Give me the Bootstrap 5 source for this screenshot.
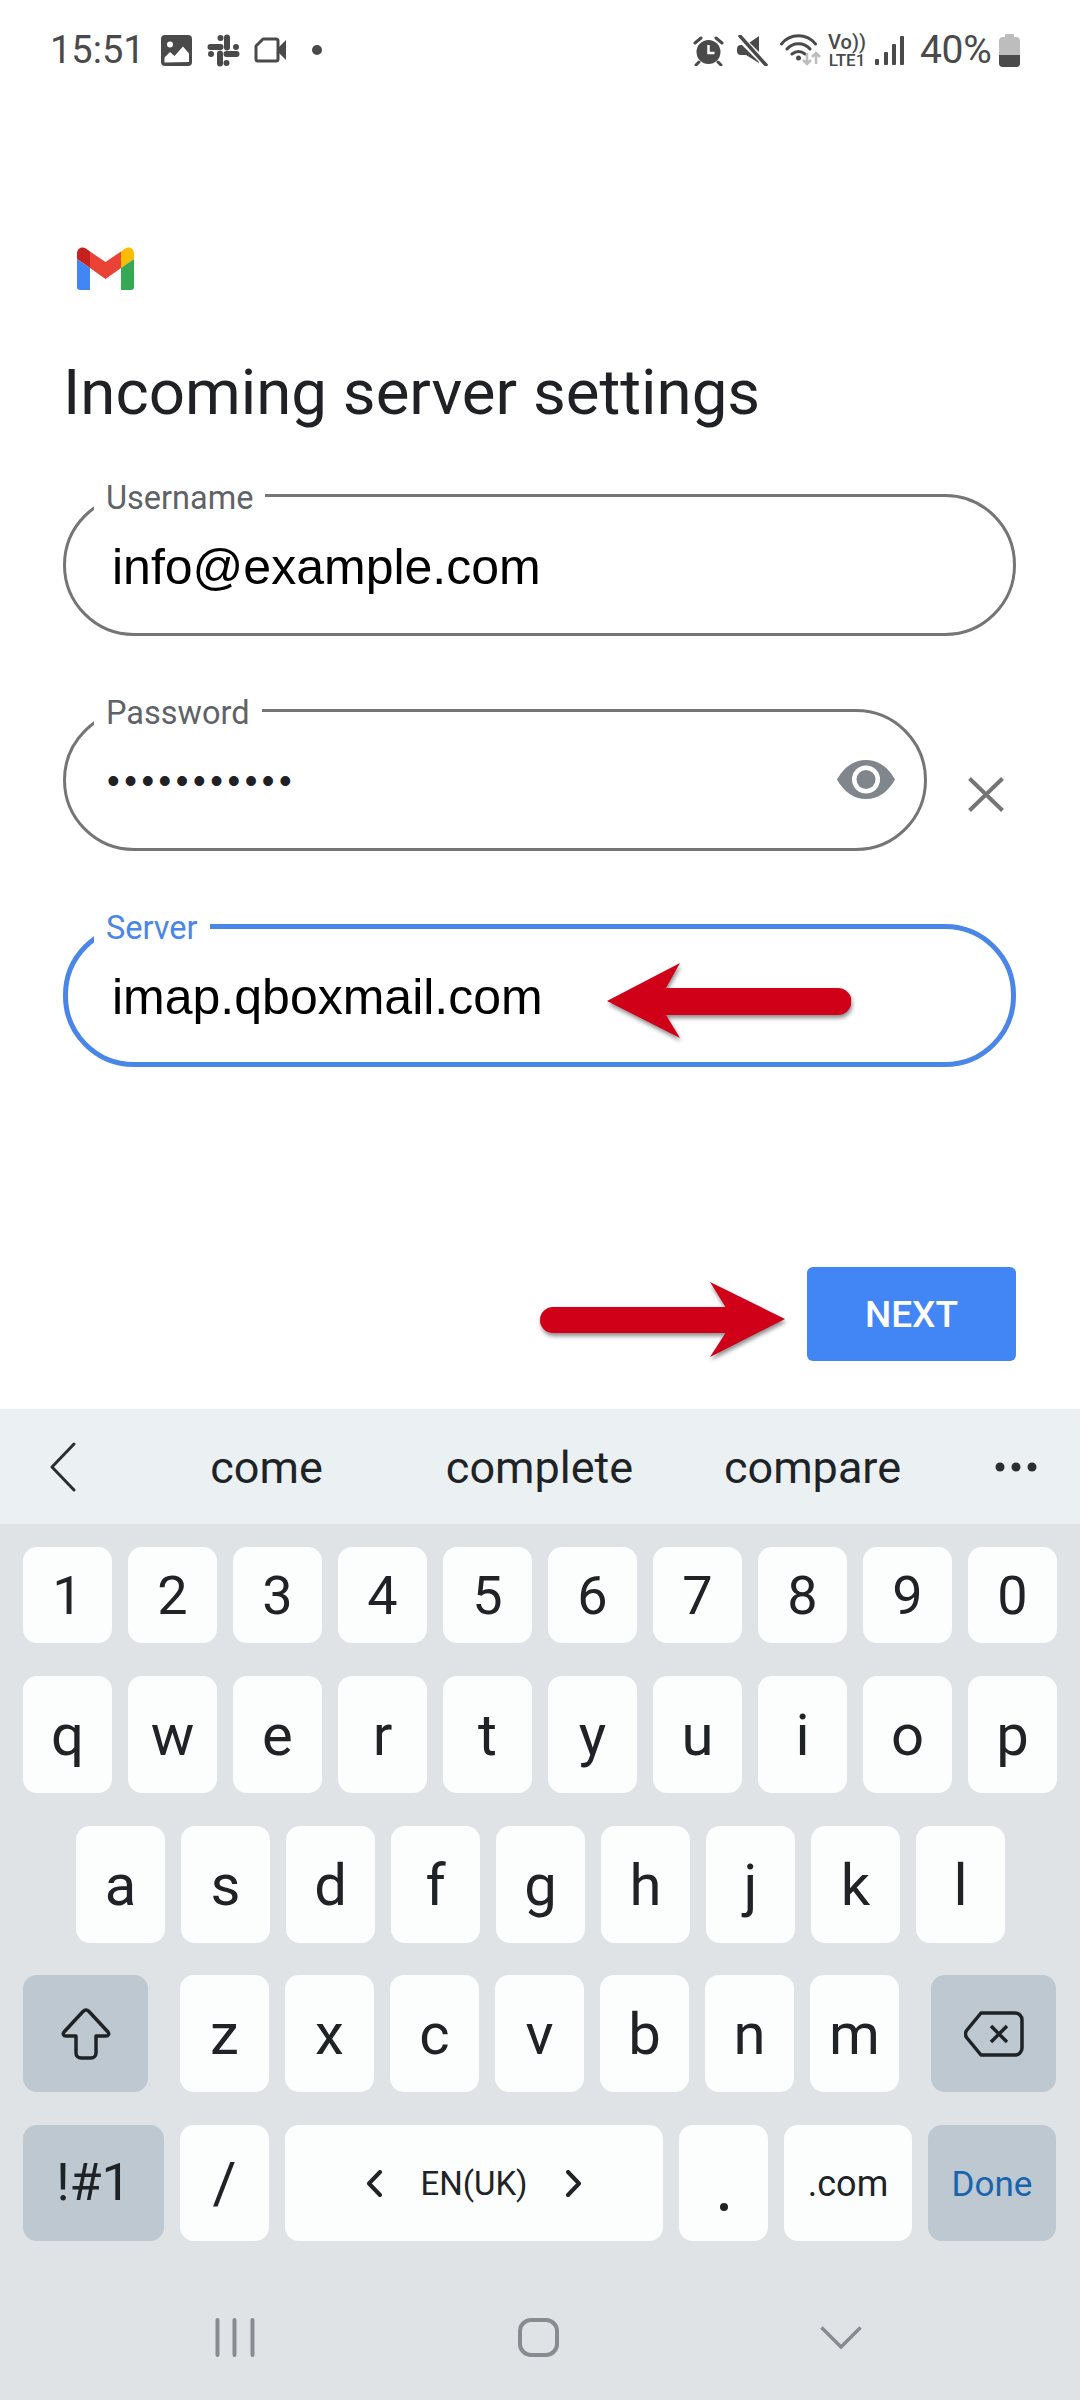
<!DOCTYPE html>
<html lang="en">
<head>
<meta charset="utf-8">
<title>Incoming server settings</title>
<link href="https://cdn.jsdelivr.net/npm/bootstrap@5.3.0/dist/css/bootstrap.min.css" rel="stylesheet">
<style>
html,body{margin:0;background:#fff}
body{width:1080px;height:2400px;overflow:hidden;font-family:Roboto,sans-serif}
.phone{width:1080px;height:2400px}
.statusbar{height:100px;padding:0 60px 0 50px;color:#4a4a4a;fill:#4a4a4a}
.stime{font-size:38px;line-height:1;width:95px}
.spct{font-size:39px;line-height:1;margin-left:16px;width:76px;letter-spacing:-.3px}
.volte{font:500 17px/17px Roboto,sans-serif;width:40px;text-align:center;margin:2px 0 0 6px}
.voltop{font-size:20px}
.gapA{margin-left:16px}.gapB{margin-left:15px}.gapC{margin-left:14px}.gapD{margin-left:25px}
.gapE{margin-left:13px}.gapF{margin-left:12px}.gapG{margin-left:8px}.gapH{margin-left:3px}
.content{height:1309px;padding:147px 64px 0 63px}
.gmark{display:block;width:57px;height:43px;margin-left:14px}
.heading{font:400 63.6px/70px Roboto,sans-serif;color:#202124;margin:68px 0 66px}
.pillbox{height:142px;border:3px solid #757575;border-radius:71px;padding-left:46px;background:#fff;font:400 50px/1 "Liberation Sans",Arial,sans-serif;color:#000}
.fval{padding-top:3px}
.pillbox.active{height:143px;border:5px solid #4a86e8;padding-left:44px}
.pillbox.active .flabel{color:#4a86e8;left:26px;top:-19px}
.flabel{position:absolute;left:28px;top:-17px;padding:0 12px;background:#fff;font:400 32.5px/36px Roboto,sans-serif;color:#5f6368}
.pwrow{margin-top:73px;margin-bottom:73px}
.pwbox{width:864px;flex:none}
.pwdots{font-size:36px;letter-spacing:4.6px;color:#202124;margin-left:-5px;padding-top:2px}
.eyeicon{position:absolute;right:29px;top:48px}
.xicon{display:block;margin:68px 0 0 41px}
.redarrow{filter:drop-shadow(1px 3px 2px rgba(0,0,0,.45))}
.arrowover{position:absolute;left:539px;top:34px}
.arrowflow{margin-top:15px}
.nextrow{margin-top:200px}
.nextbtn{width:209px;height:94px;border-radius:6px;background:#4285f4;border:0;color:#fff;font:500 37px/1 Roboto,sans-serif;margin-left:22px}
.keyboard{height:991px;background:#dfe3e6;color:#202326}
.suggest{height:115px;background:#ebf0f3;padding-left:50px;font-size:45px;margin-bottom:23px}
.sword{width:273px;text-align:center;padding-top:2px}
.sugspace{width:54px}
.sugdots{margin-left:46px}
.krow{height:117px;margin-bottom:33px;gap:16px;padding:0 23px}
.krow.digits{height:96px}
.krow.mid{padding:0 76px;margin-bottom:32px}
.krow.last{height:116px;margin-bottom:0}
.kbtn{width:89px;height:100%;border-radius:14px;background:#fcfdfd;font-size:58px;line-height:1;flex:none}
.kfn{background:#bdc8d1}
.digits .kbtn{font-size:54px;padding-top:2px}
.kwide{width:125px}
.ksym{width:141px;font-size:52px}
.kspace{width:378px;font-size:33px;gap:38px}
.kdot{padding-bottom:30px}
.kcom{width:128px;font-size:36px;padding-top:2px}
.done{width:128px;font-size:35px;color:#1a63ad;padding-top:2px}
.navrow{margin-top:77px;padding-right:4px}
.navcell{width:303px;height:39px}
</style>
</head>
<body>
<div class="phone d-flex flex-column">
  <div class="statusbar d-flex align-items-center">
    <span class="stime">15:51</span>
    <svg class="gapA" width="31" height="31" viewBox="0 0 31 31"><rect width="31" height="31" rx="4"/><circle cx="9" cy="9.500" r="3" fill="#fff"/><path d="M3.500 27.500V22.500L9 17l4.500 4 8.500-9.500 6 7v8.500z" fill="#fff"/></svg>
    <svg class="gapB" width="33" height="33" viewBox="0 0 33 33" fill="none" stroke="#4a4a4a" stroke-width="6" stroke-linecap="round"><path d="M3.500 13h10M20 3.500v10M29.500 20h-10M13 29.500v-10"/><path d="M13.500 4h.01M29 13h.01M19.500 29h.01M4 20h.01"/></svg>
    <svg class="gapC" width="33" height="26" viewBox="0 0 33 26"><path d="M9 2h13a2 2 0 0 1 2 2v18a2 2 0 0 1-2 2H4a2 2 0 0 1-2-2V9z" fill="none" stroke="#4a4a4a" stroke-width="3" stroke-linejoin="round"/><path d="M25 10l7-7v20l-7-7z"/></svg>
    <svg class="gapD" width="10" height="10" viewBox="0 0 10 10"><circle cx="5" cy="5" r="5"/></svg>
    <div class="ms-auto d-flex align-items-center">
      <svg width="31" height="31" viewBox="0 0 31 31"><circle cx="15.500" cy="17" r="12"/><path d="M15.500 10v8h6" fill="none" stroke="#fff" stroke-width="2.500"/><path d="M2 8l6-5M29 8l-6-5M6 27l-3 3M25 27l3 3" stroke="#4a4a4a" stroke-width="3" stroke-linecap="round"/></svg>
      <svg class="gapE" width="31" height="31" viewBox="0 0 31 31"><path d="M4 10h5L22 1v27L9 20H4a4 4 0 0 1-4-4v-2a4 4 0 0 1 4-4z"/><path d="M2 2l27 27" stroke="#fff" stroke-width="7"/><path d="M3 1l26 29" stroke="#4a4a4a" stroke-width="3.500" stroke-linecap="round"/></svg>
      <svg class="gapF" width="41" height="32" viewBox="0 0 41 32" fill="none"><path d="M1.500 10C10-1 27-1 35.500 10M7 15c6-7 17-7 23 0M12 20c4-3 9-3 13 0" stroke="#4a4a4a" stroke-width="3" stroke-linecap="round"/><circle cx="18.500" cy="24" r="2.500" fill="#4a4a4a"/><path d="M27 19v11M23 26l4 4 4-4M36 30V19M32 23l4-4 4 4" stroke="#bdbdbd" stroke-width="2.500"/></svg>
      <span class="volte"><span class="voltop">Vo))</span><br>LTE1</span>
      <svg class="gapG" width="29" height="29" viewBox="0 0 29 29" fill="#4a4a4a"><rect y="23" width="4" height="6" rx="1"/><rect x="9" y="16" width="4" height="13" rx="1"/><rect x="17" y="8" width="4" height="21" rx="1"/><rect x="25" width="4" height="29" rx="1"/></svg>
      <span class="spct">40%</span>
      <svg class="gapH" width="21" height="33" viewBox="0 0 21 33"><path d="M7 0h7a1 1 0 0 1 1 1v2h2a4 4 0 0 1 4 4v22a4 4 0 0 1-4 4H4a4 4 0 0 1-4-4V7a4 4 0 0 1 4-4h2V1a1 1 0 0 1 1-1z" fill="#bdbdbd"/><path d="M0 21h21v8a4 4 0 0 1-4 4H4a4 4 0 0 1-4-4z" fill="#4a4a4a"/></svg>
    </div>
  </div>

  <div class="content">
    <svg class="gmark" viewBox="0 0 57 43"><path d="M0 12V6.500C0 1 5-1 9 1.500l4 3V21z" fill="#c5221f"/><path d="M57 12V6.500C57 1 52-1 48 1.500l-4 3V21z" fill="#fbbc04"/><path d="M0 12l13 9v22H3a3 3 0 0 1-3-3z" fill="#4285f4"/><path d="M57 12l-13 9v22h10a3 3 0 0 0 3-3z" fill="#34a853"/><path d="M13 4.500L28.500 15 44 4.500V21L28.500 32 13 21z" fill="#ea4335"/></svg>
    <h1 class="heading">Incoming server settings</h1>

    <div class="pillbox position-relative d-flex align-items-center">
      <span class="flabel">Username</span><span class="fval">info@example.com</span>
    </div>

    <div class="pwrow d-flex align-items-start">
      <div class="pillbox pwbox position-relative d-flex align-items-center">
        <span class="flabel">Password</span><span class="pwdots">•••••••••••</span>
        <svg class="eyeicon" width="58" height="39" viewBox="0 0 58 39"><path d="M0 19.500C7 7 17 0 29 0s22 7 29 19.500C51 32 41 39 29 39S7 32 0 19.500z" fill="#80868b"/><circle cx="29" cy="19.500" r="14" fill="#fff"/><circle cx="29" cy="19.500" r="9.500" fill="#80868b"/></svg>
      </div>
      <svg class="xicon" width="36" height="35" viewBox="0 0 36 35"><path d="M1.500 1.500l33 32M34.500 1.500l-33 32" stroke="#757575" stroke-width="4" fill="none"/></svg>
    </div>

    <div class="pillbox active position-relative d-flex align-items-center">
      <span class="flabel">Server</span><span class="fval">imap.qboxmail.com</span>
      <svg class="redarrow arrowover" width="244" height="75" viewBox="0 0 244 75"><path d="M0 38L73 0 59 25H231a13.500 13.500 0 0 1 0 27H59l14 23z" fill="#cf0018"/></svg>
    </div>

    <div class="nextrow d-flex justify-content-end align-items-start">
      <svg class="redarrow arrowflow" width="245" height="75" viewBox="0 0 245 75"><path d="M245 37L170 0l15.500 25H13a13 13 0 0 0 0 26h172.500L170 75z" fill="#cf0018"/></svg>
      <button class="nextbtn btn p-0" type="button">NEXT</button>
    </div>
  </div>

  <div class="keyboard">
    <div class="suggest d-flex align-items-center">
      <svg width="26" height="50" viewBox="0 0 26 50" fill="none"><path d="M24 2L2 25l22 23" stroke="#2b2e31" stroke-width="3" stroke-linecap="round" stroke-linejoin="round"/></svg>
      <span class="sugspace"></span>
      <span class="sword">come</span><span class="sword">complete</span><span class="sword">compare</span>
      <svg class="sugdots" width="42" height="10" viewBox="0 0 42 10" fill="#2b2e31"><circle cx="5" cy="5" r="4.500"/><circle cx="21" cy="5" r="4.500"/><circle cx="37" cy="5" r="4.500"/></svg>
    </div>
    <div class="krow digits d-flex">
      <div class="kbtn d-flex align-items-center justify-content-center">1</div><div class="kbtn d-flex align-items-center justify-content-center">2</div><div class="kbtn d-flex align-items-center justify-content-center">3</div><div class="kbtn d-flex align-items-center justify-content-center">4</div><div class="kbtn d-flex align-items-center justify-content-center">5</div><div class="kbtn d-flex align-items-center justify-content-center">6</div><div class="kbtn d-flex align-items-center justify-content-center">7</div><div class="kbtn d-flex align-items-center justify-content-center">8</div><div class="kbtn d-flex align-items-center justify-content-center">9</div><div class="kbtn d-flex align-items-center justify-content-center">0</div>
    </div>
    <div class="krow d-flex">
      <div class="kbtn d-flex align-items-center justify-content-center">q</div><div class="kbtn d-flex align-items-center justify-content-center">w</div><div class="kbtn d-flex align-items-center justify-content-center">e</div><div class="kbtn d-flex align-items-center justify-content-center">r</div><div class="kbtn d-flex align-items-center justify-content-center">t</div><div class="kbtn d-flex align-items-center justify-content-center">y</div><div class="kbtn d-flex align-items-center justify-content-center">u</div><div class="kbtn d-flex align-items-center justify-content-center">i</div><div class="kbtn d-flex align-items-center justify-content-center">o</div><div class="kbtn d-flex align-items-center justify-content-center">p</div>
    </div>
    <div class="krow mid d-flex">
      <div class="kbtn d-flex align-items-center justify-content-center">a</div><div class="kbtn d-flex align-items-center justify-content-center">s</div><div class="kbtn d-flex align-items-center justify-content-center">d</div><div class="kbtn d-flex align-items-center justify-content-center">f</div><div class="kbtn d-flex align-items-center justify-content-center">g</div><div class="kbtn d-flex align-items-center justify-content-center">h</div><div class="kbtn d-flex align-items-center justify-content-center">j</div><div class="kbtn d-flex align-items-center justify-content-center">k</div><div class="kbtn d-flex align-items-center justify-content-center">l</div>
    </div>
    <div class="krow d-flex">
      <div class="kbtn kfn kwide d-flex align-items-center justify-content-center"><svg width="50" height="52" viewBox="0 0 50 52" fill="none"><path d="M25 2c1 0 2 .500 3 1.500L47 24c1.500 2 .500 4-2 4H35v17a5 5 0 0 1-5 5H20a5 5 0 0 1-5-5V28H5c-2.500 0-3.500-2-2-4L22 3.500C23 2.500 24 2 25 2z" stroke="#202326" stroke-width="3.500" stroke-linejoin="round"/></svg></div>
      <div class="kbtn d-flex align-items-center justify-content-center ms-3">z</div><div class="kbtn d-flex align-items-center justify-content-center">x</div><div class="kbtn d-flex align-items-center justify-content-center">c</div><div class="kbtn d-flex align-items-center justify-content-center">v</div><div class="kbtn d-flex align-items-center justify-content-center">b</div><div class="kbtn d-flex align-items-center justify-content-center">n</div><div class="kbtn d-flex align-items-center justify-content-center">m</div>
      <div class="kbtn kfn kwide d-flex align-items-center justify-content-center ms-3"><svg width="60" height="46" viewBox="0 0 60 46" fill="none"><path d="M17 2h34a7 7 0 0 1 7 7v28a7 7 0 0 1-7 7H17L3 27c-2-2.500-2-5.500 0-8z" stroke="#202326" stroke-width="3.500" stroke-linejoin="round"/><path d="M27 15l16 16M43 15L27 31" stroke="#202326" stroke-width="3.500"/></svg></div>
    </div>
    <div class="krow last d-flex">
      <div class="kbtn kfn ksym d-flex align-items-center justify-content-center">!#1</div>
      <div class="kbtn d-flex align-items-center justify-content-center">/</div>
      <div class="kbtn kspace d-flex align-items-center justify-content-center"><svg width="16" height="27" viewBox="0 0 16 27" fill="none"><path d="M14 2L3 13.500 14 25" stroke="#202326" stroke-width="4" stroke-linecap="round" stroke-linejoin="round"/></svg><span>EN(UK)</span><svg width="16" height="27" viewBox="0 0 16 27" fill="none"><path d="M2 2l11 11.500L2 25" stroke="#202326" stroke-width="4" stroke-linecap="round" stroke-linejoin="round"/></svg></div>
      <div class="kbtn kdot d-flex align-items-end justify-content-center"><svg width="8" height="8" viewBox="0 0 8 8" fill="#202326"><circle cx="4" cy="4" r="4"/></svg></div>
      <div class="kbtn kcom d-flex align-items-center justify-content-center">.com</div>
      <div class="kbtn kfn done d-flex align-items-center justify-content-center">Done</div>
    </div>
    <div class="navrow d-flex justify-content-center">
      <div class="navcell d-flex justify-content-center"><svg width="40" height="39" viewBox="0 0 40 39" fill="none"><path d="M2.500 2v35M19.500 2v35M37.500 2v35" stroke="#878c90" stroke-width="4" stroke-linecap="round"/></svg></div>
      <div class="navcell d-flex justify-content-center"><svg width="41" height="39" viewBox="0 0 41 39" fill="none"><rect x="2" y="2" width="37" height="35" rx="11" stroke="#878c90" stroke-width="4"/></svg></div>
      <div class="navcell d-flex justify-content-center align-items-center"><svg width="42" height="23" viewBox="0 0 42 23" fill="none"><path d="M1.500 1.500L21 21 40.500 1.500" stroke="#878c90" stroke-width="3.500"/></svg></div>
    </div>
  </div>
</div>
</body>
</html>
